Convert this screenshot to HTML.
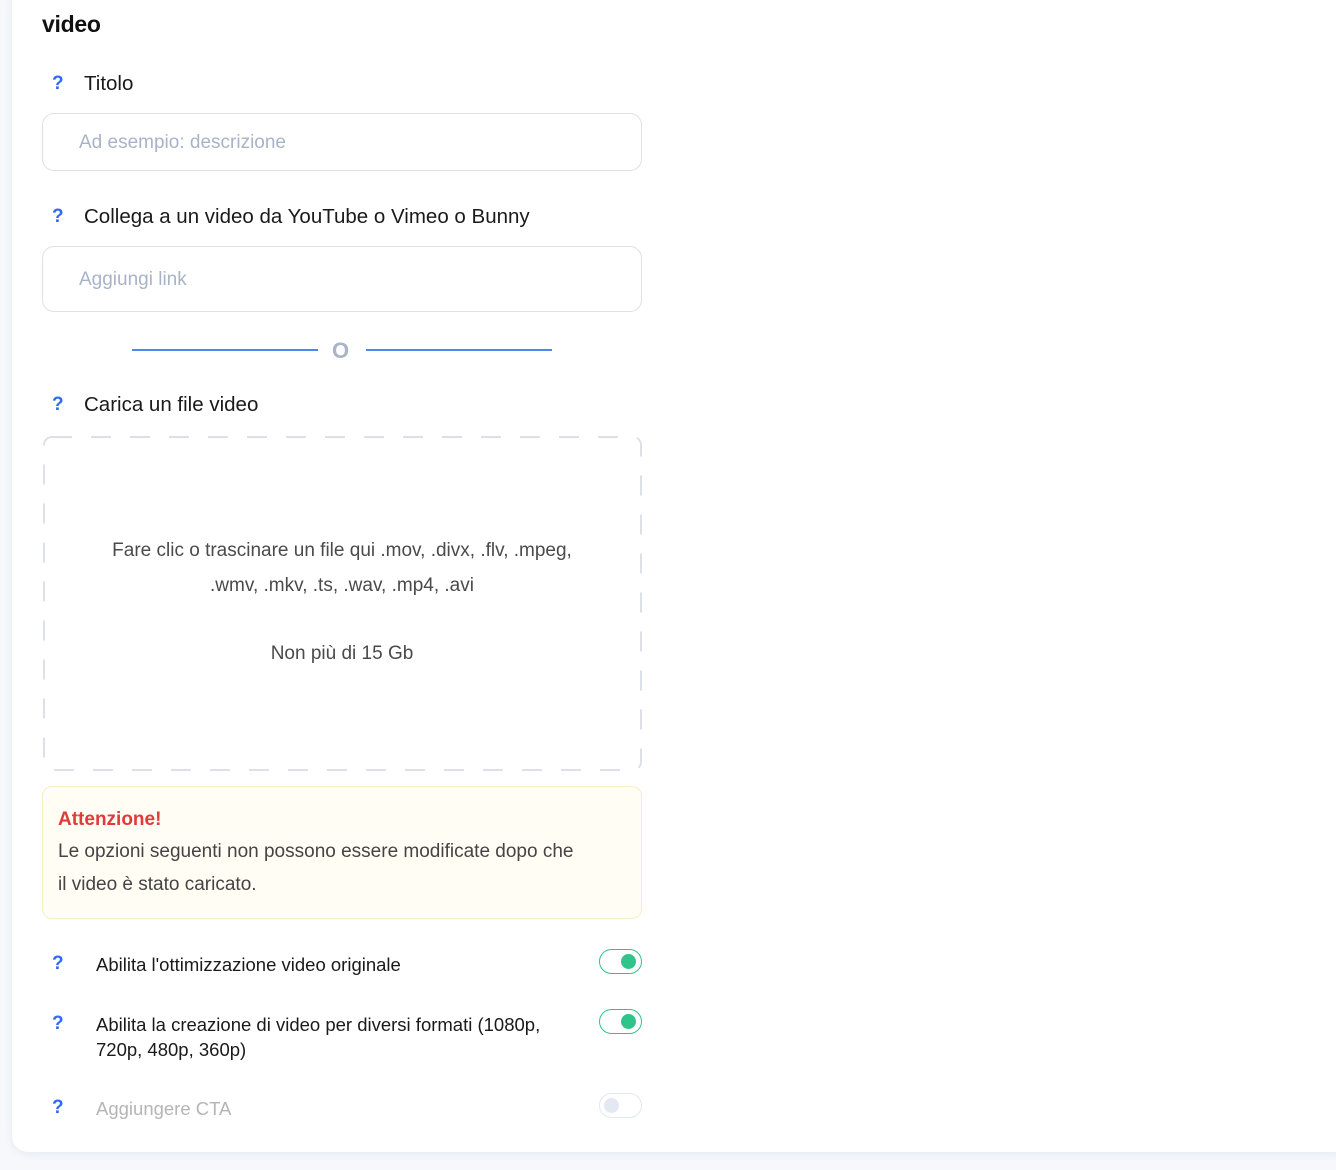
<!DOCTYPE html>
<html><head><meta charset="utf-8"><style>
*{box-sizing:border-box;margin:0;padding:0}
body{width:1336px;height:1170px;background:#f6f8fb;font-family:"Liberation Sans",sans-serif;position:relative;overflow:hidden}
.card{position:absolute;left:12px;top:-20px;width:1340px;height:1172px;background:#fff;border-radius:16px;box-shadow:0 2px 8px rgba(200,210,225,.35)}
.abs{position:absolute}
h1{position:absolute;left:42px;top:11px;font-size:23px;font-weight:bold;color:#111;letter-spacing:-0.3px}
.q{position:absolute;left:52px;color:#2f6bf5;font-weight:bold;font-size:19px}
.lbl{position:absolute;left:84px;font-size:20.5px;color:#1a1a1a}
.inp{position:absolute;left:42px;width:600px;border:1px solid #dfe1ea;border-radius:12px;color:#a9b3c8;font-size:19px;padding-left:36px}
.line{position:absolute;top:349px;height:2px;background:#4f86f0;width:186px}
.drop{position:absolute;left:43px;top:436px;width:598px;height:334px;text-align:center;color:#4a4a4a;font-size:19px}
.warn{position:absolute;left:42px;top:786px;width:600px;height:133px;background:#fffdf4;border:1px solid #f8edc6;border-radius:10px;padding:20px 24px 20px 15px}
.tog{position:absolute;left:599px;width:43px;height:25px;border:1.5px solid #2ec48a;border-radius:13px}
.tog i{position:absolute;right:5px;top:4px;width:15px;height:15px;border-radius:50%;background:#2ec48a}
.tl{position:absolute;left:96px;font-size:18.5px;color:#1a1a1a;line-height:25px;width:480px}
</style></head><body>
<div class="card"></div>
<h1>video</h1>
<div class="q" style="top:73px">?</div><div class="lbl" style="top:72px">Titolo</div>
<div class="inp" style="top:113px;height:58px;line-height:58px">Ad esempio: descrizione</div>
<div class="q" style="top:206px">?</div><div class="lbl" style="top:205px">Collega a un video da YouTube o Vimeo o Bunny</div>
<div class="inp" style="top:246px;height:66px;line-height:66px">Aggiungi link</div>
<div class="line" style="left:132px"></div><div class="line" style="left:366px"></div>
<div class="abs" style="left:332px;top:338px;font-size:22px;font-weight:bold;color:#aab3c7">O</div>
<div class="q" style="top:394px">?</div><div class="lbl" style="top:393px">Carica un file video</div>
<svg class="abs" style="left:43px;top:436px" width="599" height="335"><rect x="1" y="1" width="597" height="333" rx="8" fill="none" stroke="#dde0ea" stroke-width="2" stroke-dasharray="20 19"/></svg>
<div class="drop"><div style="position:absolute;top:97px;left:0;right:0;line-height:35px">Fare clic o trascinare un file qui .mov, .divx, .flv, .mpeg,<br>.wmv, .mkv, .ts, .wav, .mp4, .avi</div>
<div style="position:absolute;top:207px;left:0;right:0">Non più di 15 Gb</div></div>
<div class="warn"><div style="color:#e03a3a;font-weight:bold;font-size:19px;line-height:26px">Attenzione!</div>
<div style="color:#444;font-size:19px;line-height:33px;margin-top:2px">Le opzioni seguenti non possono essere modificate dopo che<br>il video è stato caricato.</div></div>
<div class="q" style="top:953px">?</div><div class="tl" style="top:952px">Abilita l'ottimizzazione video originale</div>
<div class="tog" style="top:949px"><i></i></div>
<div class="q" style="top:1013px">?</div><div class="tl" style="top:1012px">Abilita la creazione di video per diversi formati (1080p, 720p, 480p, 360p)</div>
<div class="tog" style="top:1009px"><i></i></div>
<div class="q" style="top:1097px">?</div><div class="tl" style="top:1096px;color:#b5b5b5">Aggiungere CTA</div>
<div class="tog" style="top:1093px;border-color:#e3e7ef"><i style="left:4px;right:auto;background:#e3e8f2"></i></div>
</body></html>
